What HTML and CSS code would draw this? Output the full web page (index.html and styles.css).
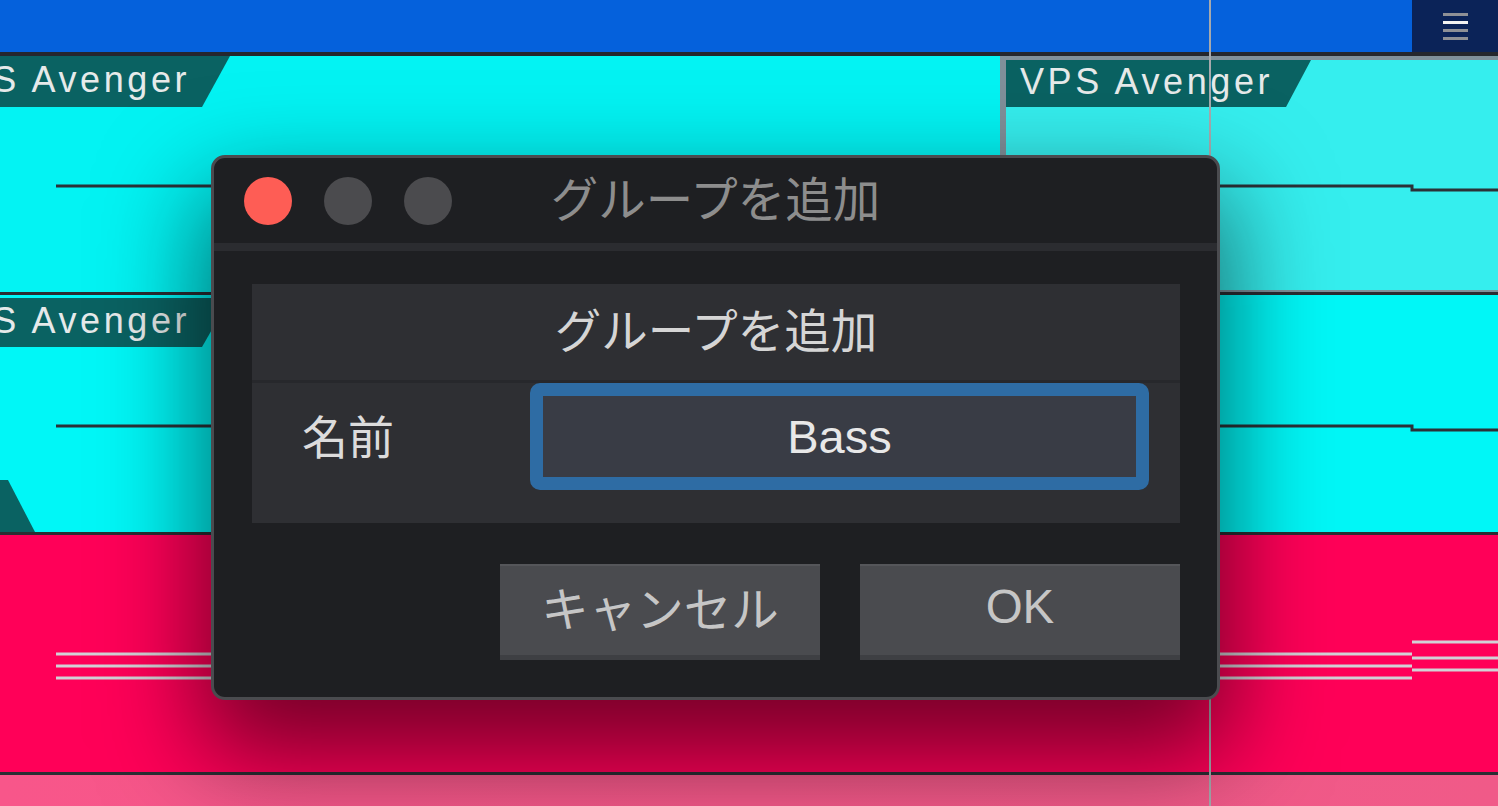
FILE: index.html
```html
<!DOCTYPE html>
<html lang="ja">
<head>
  <meta charset="UTF-8">
  <title>グループを追加</title>
  <link rel="stylesheet" href="styles.css">
</head>
<body>

  <div class="daw">

    <header class="topbar">
      <div class="topbar-fill"></div>
      <button class="menu-btn" aria-label="メニュー">
        <span></span>
        <span class="on"></span>
        <span></span>
        <span></span>
      </button>
    </header>

    <div class="track track-a">
      <div class="clip clip-a">
        <div class="clip-label cut">VPS Avenger</div>
      </div>
      <div class="clip clip-sel">
        <div class="clip-label">VPS Avenger</div>
      </div>
      <svg class="track-lines" width="1498" height="236">
        <path d="M56 130H1412V134H1498" stroke="#2b3137" stroke-width="3" fill="none"/>
      </svg>
    </div>

    <div class="track track-b">
      <div class="clip clip-cyan">
        <div class="clip-label cut low">VPS Avenger</div>
        <div class="clip-tail"></div>
      </div>
      <svg class="track-lines" width="1498" height="237">
        <path d="M56 131H1412V135H1498" stroke="#2b3137" stroke-width="3" fill="none"/>
      </svg>
    </div>

    <div class="track track-c">
      <div class="clip clip-pink"></div>
      <svg class="track-lines" width="1498" height="237">
        <g stroke="#d2d2d6" stroke-width="3">
          <line x1="56" y1="119" x2="1412" y2="119"/>
          <line x1="56" y1="131" x2="1412" y2="131"/>
          <line x1="56" y1="143" x2="1412" y2="143"/>
          <line x1="1412" y1="107" x2="1498" y2="107"/>
          <line x1="1412" y1="123" x2="1498" y2="123"/>
          <line x1="1412" y1="135" x2="1498" y2="135"/>
        </g>
      </svg>
    </div>

    <div class="track-d"></div>

    <div class="playhead"></div>

    <!-- ダイアログ -->
    <div class="dialog">
      <div class="titlebar">
        <div class="lights">
          <span class="light close"></span>
          <span class="light"></span>
          <span class="light"></span>
        </div>
        <div class="title">グループを追加</div>
        <div></div>
      </div>

      <div class="dialog-body">
        <div class="panel">
          <div class="panel-head">グループを追加</div>
          <div class="panel-row">
            <div class="field-label">名前</div>
            <input type="text" class="name-input" value="Bass">
          </div>
        </div>

        <div class="actions">
          <button class="btn">キャンセル</button>
          <button class="btn">OK</button>
        </div>
      </div>
    </div>

  </div>

</body>
</html>
```

FILE: styles.css
```css
* {
  box-sizing: border-box;
}

body {
  margin: 0;
  background-color: #1b1c20;
  font-family: "Liberation Sans", "Noto Sans CJK JP", sans-serif;
  overflow: hidden;
}

.daw {
  position: relative;
  width: 1498px;
  height: 806px;
  overflow: hidden;
  background-color: #2b2d33;
}

/* barra superior */
.topbar {
  display: flex;
  height: 56px;
  background-color: #0561dc;
  border-bottom: 4px solid #25272d;
}

.topbar-fill {
  flex: 1;
}

.menu-btn {
  width: 86px;
  display: flex;
  flex-direction: column;
  align-items: center;
  justify-content: center;
  gap: 5px;
  padding: 0;
  border: none;
  background-color: #0b2358;
}

.menu-btn span {
  width: 25px;
  height: 3px;
  background-color: #8e9096;
}

.menu-btn span.on {
  background-color: #f2f2f2;
}

/* pistas */
.track {
  position: relative;
  display: flex;
  height: 240px;
  border-bottom: 3px solid #2b2d33;
}

.track-a {
  height: 239px;
}

.clip {
  height: 100%;
  display: flex;
  flex-direction: column;
  justify-content: space-between;
  overflow: hidden;
}

.clip-a {
  width: 1000px;
  background-color: #03f3f3;
}

.clip-sel {
  flex: 1;
  background-color: #35eeee;
  border: solid #80909a;
  border-width: 4px 0 2px 6px;
}

.clip-cyan {
  flex: 1;
  background-color: #00f7f7;
}

.clip-pink {
  flex: 1;
  background-color: #ff0058;
}

.clip-label {
  width: 305px;
  height: 47px;
  padding-left: 14px;
  background-color: #0a6262;
  color: #e6eaea;
  font-size: 36px;
  letter-spacing: 3.6px;
  line-height: 44px;
  white-space: nowrap;
  clip-path: polygon(0 0, 100% 0, calc(100% - 25px) 100%, 0 100%);
}

.clip-label.cut {
  width: 307px;
  height: 51px;
  margin-left: -77px;
  line-height: 48px;
  clip-path: polygon(0 0, 100% 0, calc(100% - 28px) 100%, 0 100%);
}

.clip-label.cut.low {
  height: 49px;
  margin-top: 3px;
  line-height: 46px;
}

.clip-tail {
  width: 35px;
  height: 52px;
  background-color: #0a6262;
  clip-path: polygon(0 0, 8px 0, 100% 100%, 0 100%);
}

.track-lines {
  position: absolute;
  top: 0;
  left: 0;
  pointer-events: none;
}

.track-d {
  height: 31px;
  background: linear-gradient(90deg, #f8568a, #f05a88);
}

.playhead {
  position: absolute;
  top: 0;
  bottom: 0;
  left: 1209px;
  width: 2px;
  background-color: #a6a9ad;
}

/* dialogo */
.dialog {
  position: absolute;
  left: 211px;
  top: 155px;
  width: 1009px;
  height: 545px;
  display: flex;
  flex-direction: column;
  background-color: #1e1f22;
  border: 3px solid #4a4b4f;
  border-radius: 14px;
  box-shadow: 0 45px 100px 10px rgba(0, 0, 0, 0.55);
  overflow: hidden;
}

.titlebar {
  display: grid;
  grid-template-columns: 1fr auto 1fr;
  align-items: center;
  height: 93px;
  padding: 0 30px;
  border-bottom: 8px solid #2b2c30;
}

.lights {
  display: flex;
  gap: 32px;
}

.light {
  width: 48px;
  height: 48px;
  border-radius: 50%;
  background-color: #4b4b4e;
}

.light.close {
  background-color: #fe5d55;
}

.title {
  padding-bottom: 8px;
  font-family: "Noto Sans CJK JP", sans-serif;
  font-size: 47.5px;
  line-height: 1;
  color: #8d8d8d;
}

.dialog-body {
  flex: 1;
  display: flex;
  flex-direction: column;
  padding: 33px 37px 37px 38px;
}

.panel {
  background-color: #2e2f33;
}

.panel-head {
  height: 99px;
  display: flex;
  align-items: center;
  justify-content: center;
  padding-bottom: 10px;
  border-bottom: 3px solid #27282c;
  font-family: "Noto Sans CJK JP", sans-serif;
  font-size: 46.5px;
  color: #d5d5d5;
}

.panel-row {
  display: flex;
  align-items: center;
  height: 140px;
  padding: 0 31px 33px 50px;
}

.field-label {
  width: 228px;
  padding-bottom: 6px;
  font-family: "Noto Sans CJK JP", sans-serif;
  font-size: 46px;
  color: #dcdcdc;
}

.name-input {
  flex: 1;
  min-width: 0;
  height: 107px;
  padding: 0;
  border: 13px solid #2e6ca4;
  border-radius: 10px;
  background-color: #393c45;
  color: #e8e8e8;
  font-family: "Liberation Sans", sans-serif;
  font-size: 47px;
  text-align: center;
  outline: none;
}

.actions {
  display: flex;
  justify-content: flex-end;
  gap: 40px;
  margin-top: 41px;
}

.btn {
  width: 320px;
  height: 96px;
  padding: 0 0 8px;
  background-color: #4a4b4f;
  border: none;
  border-top: 2px solid #55565a;
  border-bottom: 5px solid #3e3f43;
  color: #c6c6c6;
  font-family: "Liberation Sans", "Noto Sans CJK JP", sans-serif;
  font-size: 47.5px;
}
```
